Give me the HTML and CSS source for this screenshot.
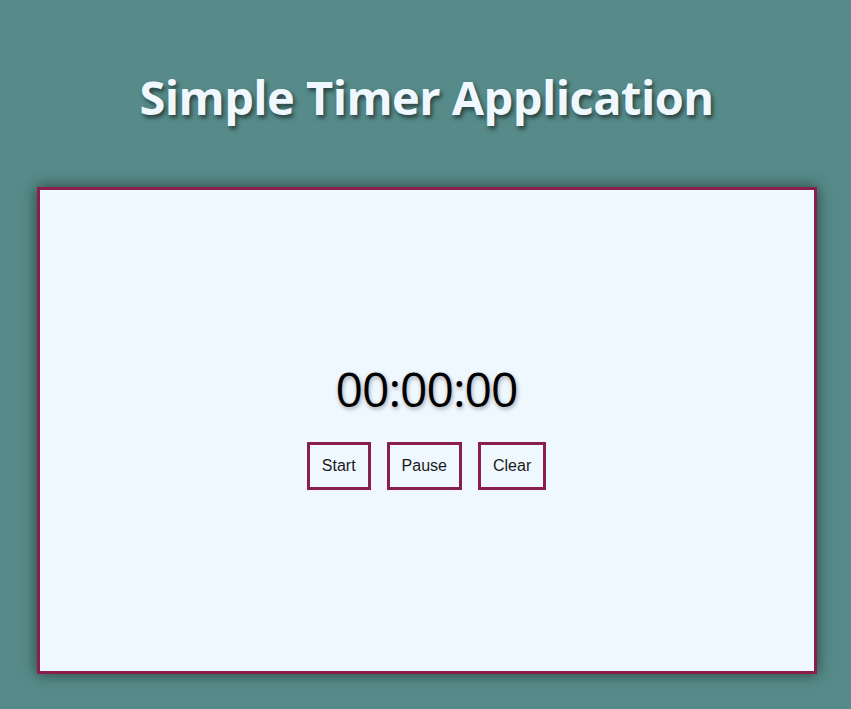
FILE: index.html
```html
<!DOCTYPE html>
<html lang="en">
<head>
<meta charset="utf-8">
<title>Simple Timer Application</title>
<link rel="stylesheet" href="styles.css">
</head>
<body>
<h1 class="title">Simple Timer Application</h1>
<main class="card">
  <div class="timer">
    <div class="display">00:00:00</div>
    <div class="controls">
      <button class="btn">Start</button>
      <button class="btn">Pause</button>
      <button class="btn">Clear</button>
    </div>
  </div>
</main>
</body>
</html>
```
FILE: styles.css
```css
html, body {
  margin: 0;
  padding: 0;
}
body {
  background: #568b89;
  font-family: "Open Sans", "Noto Sans", sans-serif;
  padding: 64px 0 35px 2px;
  display: flex;
  flex-direction: column;
  align-items: center;
}
.title {
  margin: 0;
  font-size: 47px;
  font-weight: 700;
  line-height: 66px;
  color: #f0f8ff;
  text-shadow: 2px 3px 4px rgba(0, 0, 0, 0.55);
  letter-spacing: -0.55px;
}
.card {
  margin-top: 57px;
  width: 774px;
  height: 481px;
  background: #f0f8ff;
  border: 3px solid #8a1f4c;
  box-shadow: 0 0 14px rgba(0, 0, 0, 0.55);
  display: flex;
  align-items: center;
  justify-content: center;
}
.timer {
  display: flex;
  flex-direction: column;
  align-items: center;
  gap: 25px;
  margin-top: -11px;
}
.display {
  font-size: 48px;
  line-height: 56px;
  letter-spacing: -1px;
  color: #000;
  text-shadow: 1px 2px 4px rgba(0, 0, 0, 0.35);
}
.controls {
  display: flex;
  gap: 16px;
}
.btn {
  font-family: "Liberation Sans", Arial, sans-serif;
  font-size: 16px;
  line-height: 18px;
  color: #1a1a1a;
  background: #f0f8ff;
  border: 3px solid #8a1f4c;
  padding: 12px 12px;
  margin: 0;
}
```
